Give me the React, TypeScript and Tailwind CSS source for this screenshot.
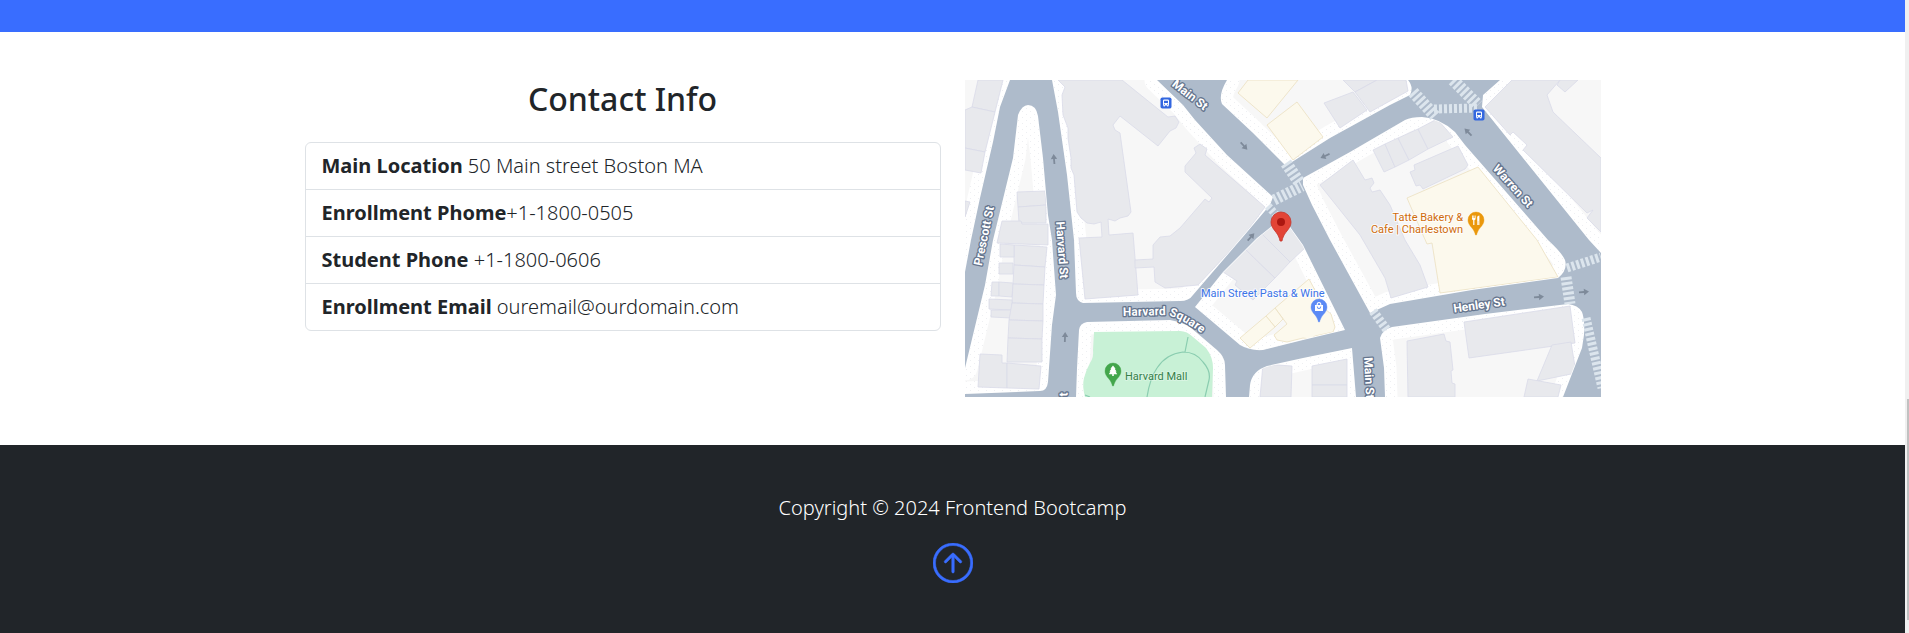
import { BsArrowUpCircle } from "react-icons/bs";

const ROADS =
  "M45 0L35 27 28 62 15 118 6 160 0 192V288L20 205 28 160 48 78 53 35Q57 25 63 25Q71 25 73 36L78 78 83 135 87 160 91 215 87 245 83 302Q82 311 75 311L0 314V317H111L112 288 114 250Q115 243 122 242L205 240Q217 242 225 247L252 270Q260 277 260 285L261 317H284L285 305Q287 291 302 286L338 278 387 268 391 317H420L419 288 415 258Q417 250 427 247L520 234 603 224Q613 225 617 232Q620 240 619 255L617 268 598 317H636V173L624 160 517 27 518 15 535 0H443Q449 7 445 15L425 25 365 58 327 82 320 85 288 53 257 24Q253 15 262 0H192L218 25 230 40 262 75 308 117 305 125 277 158 228 215Q224 221 215 221L118 223Q111 221 111 213L109 160 102 95 93 32 87 0Z" +
  "M318 137L292 158 258 192 230 227 275 265Q285 271 298 270L338 260 380 250 338 165Z" +
  "M338 98V105L347 125 365 160 405 233 425 224 507 210 593 198Q603 190 600 180Q597 173 583 160L500 65 490 52Q475 38 457 37Q446 37 440 40L385 72Z";

const BUILDINGS = [
  "13,0 38,0 30,32 7,27",
  "0,30 7,27 30,32 20,72 0,68",
  "0,68 20,72 16,93 0,90",
  "0,121 5,122 0,137",
  "93,0 157,0 203,37 210,36 214,42 211,48 205,51 193,66 155,36 148,45 150,50 155,53 166,132 163,136 155,138 150,141 143,139 144,155 168,153 173,215 120,219 114,158 137,157 136,142 129,144 122,143 116,138 112,132 109,95 106,88 106,78 103,58 103,48 98,35 97,15 100,7",
  "235,64 242,69 240,75 300,127 277,158 233,205 200,208 190,202 189,187 170,188 170,180 188,179 188,165 195,157 205,156 215,148 240,119 244,122 247,118 220,92 220,86 231,73 229,68",
  "52,112 80,111 81,125 53,127",
  "53,127 81,125 81,143 54,143",
  "37,141 56,141 57,144 83,144 83,165 32,163",
  "49,165 82,167 80,187 49,185",
  "35,164 49,165 49,177 35,177",
  "49,185 80,187 79,205 48,204",
  "34,183 48,183 48,194 34,194",
  "27,202 34,202 34,216 26,216",
  "34,202 48,203 47,217 34,216",
  "48,204 79,205 78,224 47,223",
  "24,219 47,220 47,230 24,229",
  "26,230 47,230 46,238 26,237",
  "47,223 78,224 78,241 44,240",
  "44,240 78,241 77,259 43,258",
  "43,258 77,259 77,282 42,282",
  "15,274 37,275 37,283 42,283 42,308 13,307",
  "42,283 76,286 74,309 42,308",
  "378,0 390,12 412,0",
  "359,23 388,12 402,30 375,48",
  "390,12 412,0 441,0 443,11 405,32",
  "355,105 388,80 400,100 407,98 409,103 405,108 407,112 415,110 425,125 440,160 455,185 463,207 426,218 420,198 395,155",
  "408,70 420,64 430,87 419,92",
  "420,64 433,58 444,80 430,87",
  "433,58 453,49 463,69 444,80",
  "453,49 472,39 488,57 463,69",
  "445,92 450,90 449,85 493,66 503,85 500,89 458,109 455,105 451,106",
  "520,27 547,0 595,0 582,15 588,32 636,78 636,152 622,138 628,130 622,133 558,70 562,65 548,52 545,55",
  "592,5 600,12 613,0 595,0",
  "499,242 605,226 610,263 504,278",
  "587,265 606,262 611,293 572,301",
  "563,299 596,305 593,317 559,317",
  "442,261 479,254 481,261 485,262 488,290 486,291 487,303 490,304 490,317 443,317",
  "258,192 279,168 310,198 288,220 270,205 272,201",
  "279,168 295,152 325,182 310,198",
  "295,152 312,139 320,141 340,168 325,182",
  "298,284 327,286 326,317 295,317",
  "347,286 382,279 382,305 347,305",
  "347,305 382,305 382,317 347,317",
];

const SHOPS = [
  "283,0 333,0 302,38 273,13",
  "332,22 358,57 328,80 302,45",
  "442,118 513,87 572,160 593,197 475,213 467,163 462,164 458,155",
  "310,228 344,199 360,229 366,234 370,247 368,252 350,256 345,259 338,258 322,262 312,260 309,255 322,244",
  "301,236 310,228 318,239 310,247",
  "275,258 301,236 310,247 285,268",
];

const CROSSINGS: [string, number][] = [
  ["M321 83L334 102", 12],
  ["M309 120L337 106", 11],
  ["M303 126L312 136", 8],
  ["M448 12L470 36", 12],
  ["M469 29L513 28", 9],
  ["M488 0L513 25", 12],
  ["M602 188L636 177", 9],
  ["M601 197L605 224", 11],
  ["M621 238L637 308", 9],
  ["M408 231L422 250", 9],
];

const ARROWS = [
  "translate(89 79) rotate(-95)",
  "translate(100 257) rotate(-88)",
  "translate(279 66) rotate(48)",
  "translate(360 76) rotate(155)",
  "translate(286 157) rotate(-48)",
  "translate(503 52) rotate(-135)",
  "translate(574 217) rotate(-5)",
  "translate(619 212) rotate(-5)",
];

const STREETS = [
  { name: "Prescott St", at: "translate(19 156) rotate(-78)" },
  { name: "Harvard St", at: "translate(97 170) rotate(86)" },
  { name: "Main St", at: "translate(225 15) rotate(38)" },
  { name: "Warren St", at: "translate(548 106) rotate(48)" },
  { name: "Henley St", at: "translate(514 225) rotate(-8)" },
  { name: "Main St", at: "translate(404 298) rotate(87)" },
  { name: "Harvard St", at: "translate(98 341) rotate(-89)" },
];

function BusStop({ x, y }: { x: number; y: number }) {
  return (
    <g transform={`translate(${x} ${y})`}>
      <rect x="-5.5" y="-5.5" width="11" height="11" rx="1.8" fill="#3367e0" />
      <path
        fill="#fff"
        fillRule="evenodd"
        d="M-3 -2.2Q-3 -3.5 -1.8 -3.5H1.8Q3 -3.5 3 -2.2V2.4H2.4V3.4H1.2V2.4H-1.2V3.4H-2.4V2.4H-3ZM-2 -2.2V0H2V-2.2ZM-2.1 0.8V1.7H-1.1V0.8ZM1.1 0.8V1.7H2.1V0.8Z"
      />
    </g>
  );
}

function Marker({ x, y, color, glyph }: { x: number; y: number; color: string; glyph: string }) {
  return (
    <g transform={`translate(${x} ${y})`}>
      <path
        d="M0 -8A8 8 0 0 1 8 0C8 5 4 7 2 11Q0.8 13.5 0.5 15H-0.5Q-0.8 13.5 -2 11C-4 7 -8 5 -8 0A8 8 0 0 1 0 -8Z"
        fill={color}
        stroke={color}
        strokeWidth="0.4"
      />
      <path d={glyph} fill="#fff" fillRule="evenodd" />
    </g>
  );
}

function LocationMap() {
  return (
    <svg
      viewBox="0 0 636 317"
      className="block h-auto w-full"
      role="img"
      aria-label="Street map of the main location"
      fontFamily="Roboto, sans-serif"
    >
      <defs>
        <pattern id="paving" width="8" height="6" patternUnits="userSpaceOnUse">
          <rect width="8" height="6" fill="#fff" />
          <rect x="1" y="1" width="1" height="1" fill="#eeeff2" />
          <rect x="5" y="4" width="1" height="1" fill="#eeeff2" />
        </pattern>
        <path id="harvard-square" d="M158 236L200 235Q214 236 243 258" />
      </defs>
      <rect width="636" height="317" fill="#f7f7f7" />
      <path d={ROADS} fill="none" stroke="url(#paving)" strokeWidth="25" strokeLinejoin="round" />
      <g fill="#e8e9ed" stroke="#d9dae8" strokeWidth="0.8">
        {BUILDINGS.map((points) => (
          <polygon key={points} points={points} />
        ))}
      </g>
      <g fill="#fcf9ed" stroke="#ebdfc0" strokeWidth="0.8">
        {SHOPS.map((points) => (
          <polygon key={points} points={points} />
        ))}
      </g>
      <path
        d="M129 252L215 251Q222 251 228 257L241 268Q248 277 248 288L247 317H120Q117 306 119 298Q121 290 125 283Q129 277 128 270Z"
        fill="#c8f1d6"
      />
      <path
        d="M182 317Q185 298 192 288Q201 274 218 272Q231 272 238 282Q246 291 244 300L240 317M220 272L223 257M120 315L125 317"
        fill="none"
        stroke="#8acdb0"
        strokeWidth="1.2"
      />
      <path d={ROADS} fill="#aebbcb" fillRule="evenodd" stroke="#fff" strokeWidth="1.4" />
      <path d={ROADS} fill="#aebbcb" fillRule="evenodd" />

      {CROSSINGS.map(([d, width]) => (
        <path key={d} d={d} stroke="#dce5ed" strokeWidth={width} strokeDasharray="3 2" fill="none" />
      ))}
      {ARROWS.map((at) => (
        <path key={at} transform={at} d="M-5 -0.9H0V-3.2L5 0L0 3.2V0.9H-5Z" fill="#7e8a9a" />
      ))}

      <g
        fill="#fff"
        stroke="#64748d"
        strokeWidth="2.6"
        strokeLinejoin="round"
        paintOrder="stroke"
        fontSize="12"
        fontWeight="700"
        textAnchor="middle"
      >
        {STREETS.map(({ name, at }) => (
          <text key={at} transform={at} y="4">
            {name}
          </text>
        ))}
        <text textAnchor="start">
          <textPath href="#harvard-square">Harvard Square</textPath>
        </text>
      </g>

      <BusStop x={201} y={23} />
      <BusStop x={514} y={35} />

      <g
        fontSize="11"
        stroke="#fff"
        strokeWidth="2"
        strokeOpacity="0.8"
        strokeLinejoin="round"
        paintOrder="stroke"
      >
        <text x="236" y="217" fill="#3c74e8">
          Main Street Pasta &amp; Wine
        </text>
        <text x="498" y="141" textAnchor="end" fill="#cf6c0c">
          Tatte Bakery &amp;
        </text>
        <text x="498" y="153" textAnchor="end" fill="#cf6c0c">
          Cafe | Charlestown
        </text>
        <text x="160" y="300" fill="#36804a" strokeOpacity="0.3">
          Harvard Mall
        </text>
      </g>

      <Marker
        x={354}
        y={227}
        color="#5b8af5"
        glyph="M-4 -2H-2.4Q-2.4 -5 0 -5Q2.4 -5 2.4 -2H4V4H-4ZM-1.3 -2H1.3Q1.3 -4 0 -4Q-1.3 -4 -1.3 -2ZM-2.3 -0.5Q-1.8 2 0 2Q1.8 2 2.3 -0.5H1.3Q1 1 0 1Q-1 1 -1.3 -0.5Z"
      />
      <Marker
        x={511}
        y={140}
        color="#ea980c"
        glyph="M-4 -4.5H-3.2V-2H-2.6V-4.5H-1.8V-2H-1.2V-4.5H-0.4V-1.5Q-0.4 0 -1.6 0.2V5H-2.8V0.2Q-4 0 -4 -1.5ZM1.2 5V-3Q1.4 -4.5 3.4 -4.5V5H2.2V1H1.9V5Z"
      />
      <Marker
        x={148}
        y={291}
        color="#43a64c"
        glyph="M0 -5.5L2.6 -2.2H1.7L3.6 0.6H2.6L4.2 3.2H0.8V5H-0.8V3.2H-4.2L-2.6 0.6H-3.6L-1.7 -2.2H-2.6Z"
      />

      <g transform="translate(316 142)">
        <path
          d="M0 -10A10 10 0 0 1 10 0C10 6 5 9 2.6 14Q1.2 17 1 19H-1Q-1.2 17 -2.6 14C-5 9 -10 6 -10 0A10 10 0 0 1 0 -10Z"
          fill="#e24436"
          stroke="#c5342a"
          strokeWidth="0.8"
        />
        <circle r="4" fill="#ab1710" />
      </g>
    </svg>
  );
}

const CONTACTS = [
  { label: "Main Location", value: " 50 Main street Boston MA" },
  { label: "Enrollment Phome", value: "+1-1800-0505" },
  { label: "Student Phone", value: " +1-1800-0606" },
  { label: "Enrollment Email", value: " ouremail@ourdomain.com" },
];

export default function App() {
  return (
    <div className="flex min-h-screen bg-white font-['Noto_Sans',sans-serif] text-[#212529]">
      <div className="flex min-w-0 flex-1 flex-col">
        <div className="h-8 bg-[#396dff]" />
        <section className="py-12">
          <div className="mx-auto grid max-w-[1320px] gap-6 px-3 md:grid-cols-2">
            <div>
              <h2 className="mb-6 text-center text-[32px] leading-[38px] font-medium">Contact Info</h2>
              <ul className="divide-y divide-[#dee2e6] rounded-md border border-[#dee2e6] text-xl leading-[30px] font-light">
                {CONTACTS.map(({ label, value }) => (
                  <li key={label} className="px-4 py-2">
                    <span className="font-bold">{label}</span>
                    {value}
                  </li>
                ))}
              </ul>
            </div>
            <LocationMap />
          </div>
        </section>
        <footer className="flex flex-1 flex-col items-center gap-5 bg-[#212529] pt-12 pb-10 text-white">
          <p className="text-xl leading-[30px] font-light">Copyright © 2024 Frontend Bootcamp</p>
          <a href="#" aria-label="Back to top" className="text-[#396dff]">
            <BsArrowUpCircle size={40} stroke="currentColor" strokeWidth={0.2} />
          </a>
        </footer>
      </div>
      <div className="flex w-1 flex-col items-end bg-[#f0f0f0] pt-[399px]" aria-hidden="true">
        <div className="h-[221px] w-0.5 bg-[#c1c1c1]" />
      </div>
    </div>
  );
}
